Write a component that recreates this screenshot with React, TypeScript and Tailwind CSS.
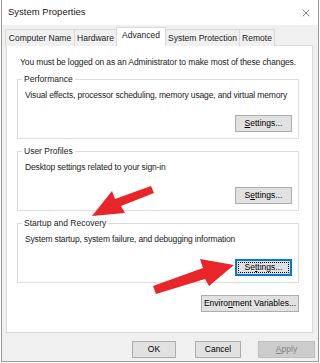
import { X } from "lucide-react"

const font = { fontFamily: '"Liberation Sans", Arial, sans-serif' }

function WinButton({ label, underline, focused, disabled, className = "" }: { label: string; underline?: number; focused?: boolean; disabled?: boolean; className?: string }) {
  const chars = label.split("")
  return (
    <div
      className={`flex items-center justify-center h-[17px] text-[8.5px] leading-none border ${
        focused ? "border-[#0078d7] shadow-[inset_0_0_0_1px_#0078d7]" : disabled ? "border-[#bfbfbf]" : "border-[#adadad]"
      } ${disabled ? "bg-[#cccccc] text-[#838383]" : "bg-[#e1e1e1] text-black"} ${className}`}
    >
      {focused ? (
        <span className="flex items-center justify-center w-[calc(100%-4px)] h-[calc(100%-4px)] border border-dotted border-black">
          {chars.map((c, i) => (
            <span key={i} className={i === underline ? "underline" : ""}>{c}</span>
          ))}
        </span>
      ) : (
        <span>
          {chars.map((c, i) => (
            <span key={i} className={i === underline ? "underline" : ""}>{c}</span>
          ))}
        </span>
      )}
    </div>
  )
}

function Group({ title, text, underline, focused }: { title: string; text: string; underline: number; focused?: boolean }) {
  return (
    <div className="relative ml-[10px] mr-[13px] border border-[#dcdcdc] h-[60px] pt-[9px] pl-[7px] pr-[6px]">
      <div className="absolute -top-[7px] left-[4px] bg-white px-[2px] text-[8.5px] leading-[12px]">{title}</div>
      <div className="text-[8.5px] leading-[12px] tracking-[-0.16px] whitespace-nowrap">{text}</div>
      <div className="flex justify-end mt-[14px]">
        <WinButton label="Settings..." underline={underline} focused={focused} className="w-[57px]" />
      </div>
    </div>
  )
}

const tabs = [
  { name: "Computer Name", w: "w-[70px]" },
  { name: "Hardware", w: "w-[43px]" },
  { name: "Advanced", w: "w-[50px]" },
  { name: "System Protection", w: "w-[75px]" },
  { name: "Remote", w: "w-[36px]" },
]

export default function App() {
  return (
    <div className="relative w-[320px] h-[363px] bg-white text-[#1a1a1a] overflow-hidden" style={font}>
      <div className="ml-[1px] w-[318px] h-[362px] border border-[#9a9a9a] border-t-0 bg-[#f0f0f0] flex flex-col">
        {/* title bar */}
        <div className="h-[25px] bg-white flex items-center justify-between pl-[6px] pr-[6px] shrink-0">
          <span className="text-[9.5px]">System Properties</span>
          <X className="w-[12px] h-[12px]" strokeWidth={1.1} />
        </div>
        {/* tabs */}
        <div className="flex items-end pl-[3px] mt-[2px] h-[19px] relative z-10 shrink-0">
          {tabs.map((t) =>
            t.name === "Advanced" ? (
              <div
                key={t.name}
                className={`${t.w} h-[19px] bg-white border border-[#d9d9d9] border-b-0 text-[8.5px] flex items-center justify-center whitespace-nowrap -ml-[1px] pb-[3px]`}
              >
                {t.name}
              </div>
            ) : (
              <div
                key={t.name}
                className={`${t.w} h-[17px] bg-[#f0f0f0] border border-[#d9d9d9] border-b-0 -ml-[1px] first:ml-0 text-[8.5px] flex items-center justify-center whitespace-nowrap`}
              >
                {t.name}
              </div>
            )
          )}
        </div>
        {/* panel */}
        <div className="ml-[4px] w-[307px] -mt-[1px] h-[288px] bg-white border border-[#d9d9d9] pt-[10px] shrink-0">
          <div className="pl-[13px] text-[8.5px] leading-[12px] tracking-[-0.12px] whitespace-nowrap">
            You must be logged on as an Administrator to make most of these changes.
          </div>
          <div className="mt-[11px] flex flex-col gap-[12px]">
            <Group title="Performance" underline={0} text="Visual effects, processor scheduling, memory usage, and virtual memory" />
            <Group title="User Profiles" underline={1} text="Desktop settings related to your sign-in" />
            <Group title="Startup and Recovery" underline={2} text="System startup, system failure, and debugging information" focused />
          </div>
          <div className="flex justify-end mt-[12px] mr-[13px]">
            <WinButton label="Environment Variables..." underline={6} className="w-[98px]" />
          </div>
        </div>
        {/* bottom buttons */}
        <div className="flex justify-end pr-[3px] mt-[8px]">
          <WinButton label="OK" className="w-[44px]" />
          <WinButton label="Cancel" className="w-[46px] ml-[19px]" />
          <WinButton label="Apply" underline={0} disabled className="w-[57px] ml-[17px]" />
        </div>
      </div>
      {/* annotation arrows */}
      <svg className="absolute inset-0 pointer-events-none" width="320" height="363">
        <g fill="#e8262a">
          <polygon points="151,186 154,193 121,206 125,213 92,216 112,191 115,199" />
          <polygon points="153,286 156,294 205,279 209,286 234,265 200,259 203,268" />
        </g>
      </svg>
    </div>
  )
}
